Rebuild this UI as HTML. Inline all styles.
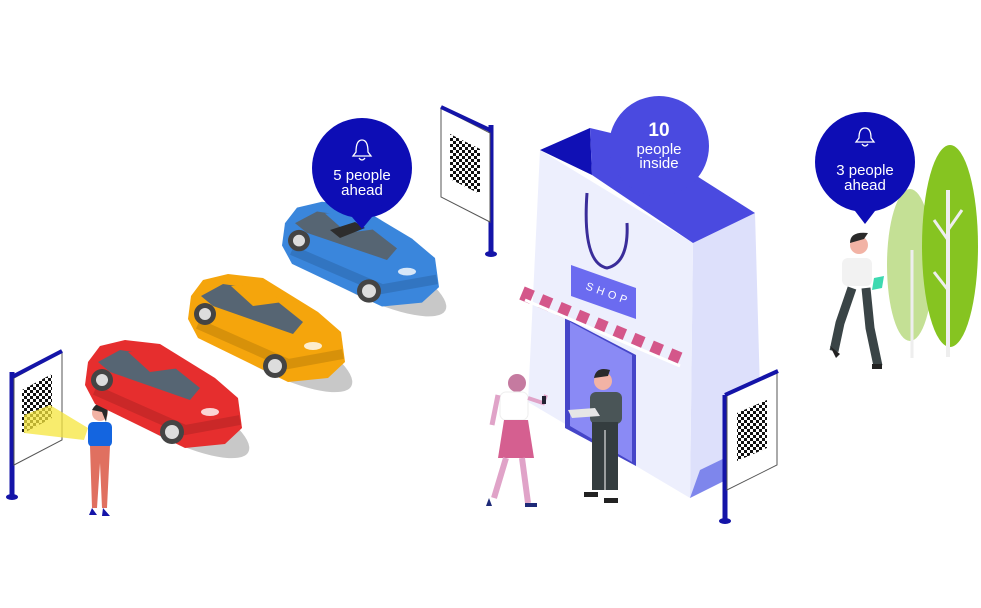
<!DOCTYPE html>
<html><head><meta charset="utf-8"><style>
html,body{margin:0;padding:0;background:#fff;width:981px;height:608px;overflow:hidden}
svg{display:block}
text{font-family:"Liberation Sans",sans-serif;fill:#fff}
</style></head><body>
<svg width="981" height="608" viewBox="0 0 981 608" xmlns="http://www.w3.org/2000/svg">
<defs>
<pattern id="qr" width="6" height="6" patternUnits="userSpaceOnUse">
<rect width="6" height="6" fill="#fff"/><rect width="3" height="3" fill="#111"/><rect x="3" y="3" width="3" height="3" fill="#111"/>
</pattern>
<g id="car">
<ellipse cx="170" cy="412" rx="88" ry="26" fill="#c8c8c8" transform="rotate(27 170 412)"/>
<path d="M88,362 L100,346 L125,340 L160,344 L215,378 L238,398 L242,428 L225,444 L185,448 L95,404 L85,385 Z"/>
<path d="M98,362 L120,350 L160,356 L200,388 L190,400 L110,372 Z" fill="#566573"/>
<path d="M128,352 L155,350 L180,368 L150,372 Z" class="roof"/>
<path d="M95,390 L185,430 L240,420" fill="none" stroke="#000" stroke-opacity="0.12" stroke-width="10"/>
<circle cx="102" cy="380" r="11" fill="#444"/><circle cx="102" cy="380" r="6" fill="#ddd"/>
<circle cx="172" cy="432" r="12" fill="#444"/><circle cx="172" cy="432" r="7" fill="#ddd"/>
<ellipse cx="210" cy="412" rx="9" ry="4" fill="#fff" opacity="0.8"/>
</g>
</defs>

<!-- Left sign -->
<line x1="12" y1="372" x2="12" y2="496" stroke="#1414a8" stroke-width="5"/>
<ellipse cx="12" cy="497" rx="6" ry="3" fill="#1414a8"/>
<polygon points="14,378 62,352 62,440 14,465" fill="#fff" stroke="#555" stroke-width="1"/>
<line x1="12" y1="377" x2="62" y2="351" stroke="#1414a8" stroke-width="4"/>
<polygon points="22,390 52,374 52,418 22,434" fill="url(#qr)"/>
<polygon points="24,415 50,405 88,428 84,440 24,433" fill="#f5e63c" opacity="0.75"/>

<!-- Left woman -->
<circle cx="100" cy="413" r="8" fill="#f2b3a5"/>
<path d="M92,410 q6,-12 16,-2 l-2,14 l-4,-10 z" fill="#2a2a2a"/>
<rect x="88" y="422" width="24" height="25" rx="5" fill="#1465e0"/>
<path d="M90,446 h20 l-3,62 h-5 l-2,-45 l-3,45 h-5 z" fill="#e07060"/>
<path d="M92,508 l-3,7 l8,0 z M103,508 l-1,8 l8,0 z" fill="#1414a8"/>

<!-- Cars -->
<use href="#car" fill="#e62e2e"/>
<use href="#car" fill="#f5a50c" transform="translate(103,-66)"/>
<use href="#car" fill="#3a86dc" transform="translate(197,-128) scale(1,0.97)"/>
<polygon points="330,230 355,222 365,228 340,238" fill="#2d2d2d"/>

<!-- Bubble 5 -->
<circle cx="362" cy="168" r="50" fill="#0d0db5"/>
<polygon points="342,205 382,205 362,229" fill="#0d0db5"/>
<path d="M356,152 q0,-12 6,-12 q6,0 6,12 l3,4 h-18 z M359,158 q3,4 6,0" fill="none" stroke="#fff" stroke-width="1.3"/>
<text x="362" y="180" font-size="15" text-anchor="middle">5 people</text>
<text x="362" y="195" font-size="15" text-anchor="middle">ahead</text>

<!-- Middle sign -->
<line x1="491" y1="125" x2="491" y2="253" stroke="#1414a8" stroke-width="5"/>
<ellipse cx="491" cy="254" rx="6" ry="3" fill="#1414a8"/>
<polygon points="441,108 490,133 490,222 441,197" fill="#fff" stroke="#555" stroke-width="1"/>
<line x1="441" y1="107" x2="492" y2="131" stroke="#1414a8" stroke-width="4"/>
<polygon points="450,134 480,149 480,194 450,179" fill="url(#qr)"/>

<!-- Shop bag -->
<polygon points="693,243 755,213 762,462 690,498" fill="#dde0fb"/>
<polygon points="540,150 693,243 690,498 528,402" fill="#edeffd"/>
<polygon points="700,470 762,440 762,462 690,498" fill="#7e86ec"/>
<polygon points="540,150 590,128 592,175" fill="#1010b5"/>
<polygon points="590,128 640,140 755,213 693,243 592,175" fill="#4a4ae0"/>
<path d="M587,193 q-5,70 20,75 q22,-5 20,-45" fill="none" stroke="#3a2d9a" stroke-width="3"/>
<polygon points="571,265 636,288 636,319 571,296" fill="#6b6bf0"/>
<text x="0" y="0" font-size="11" font-family="Liberation Serif" transform="translate(585,289) rotate(20)" letter-spacing="4">SHOP</text>
<polygon points="565,318 636,355 636,466 565,428" fill="#4545c8"/>
<polygon points="570,322 632,355 632,462 570,426" fill="#8a8af5"/>
<line x1="522" y1="293" x2="682" y2="360" stroke="#d4578a" stroke-width="14" stroke-dasharray="11 9"/>
<line x1="525" y1="300" x2="680" y2="366" stroke="#fff" stroke-width="3"/>

<!-- Bubble 10 -->
<circle cx="659" cy="146" r="50" fill="#4a4ae0"/>
<polygon points="640,184 678,184 659,206" fill="#4a4ae0"/>
<text x="659" y="136" font-size="19" font-weight="bold" text-anchor="middle">10</text>
<text x="659" y="154" font-size="15" text-anchor="middle">people</text>
<text x="659" y="168" font-size="15" text-anchor="middle">inside</text>

<!-- Pink woman -->
<circle cx="517" cy="383" r="9" fill="#c57aa0"/>
<rect x="500" y="392" width="28" height="28" rx="6" fill="#fff" stroke="#eee"/>
<path d="M528,398 l15,5 l3,-8" stroke="#e0a3c8" stroke-width="4" fill="none"/>
<rect x="542" y="396" width="4" height="8" fill="#223"/>
<path d="M498,395 l-6,30" stroke="#e0a3c8" stroke-width="5"/>
<polygon points="504,420 528,420 534,458 498,458" fill="#d55f90"/>
<path d="M506,458 l-12,40 M522,458 l6,45" stroke="#e0a3c8" stroke-width="6"/>
<path d="M489,498 l-3,8 h6 z M525,503 h12 v4 h-12z" fill="#1e2a78"/>

<!-- Man at shop -->
<circle cx="603" cy="381" r="9" fill="#f2b3a5"/>
<path d="M594,378 q2,-12 16,-8 l-2,6z" fill="#2a2a2a"/>
<rect x="590" y="392" width="32" height="32" rx="6" fill="#4a5557"/>
<polygon points="568,410 595,408 600,416 572,418" fill="#e6e6e6"/>
<rect x="592" y="422" width="26" height="68" fill="#343d3f"/>
<line x1="605" y1="430" x2="605" y2="492" stroke="#fff" stroke-width="1"/>
<path d="M584,492 h14 v5 h-14z M604,498 h14 v5 h-14z" fill="#222"/>

<!-- Right sign -->
<line x1="725" y1="395" x2="725" y2="520" stroke="#1414a8" stroke-width="5"/>
<ellipse cx="725" cy="521" rx="6" ry="3" fill="#1414a8"/>
<polygon points="727,395 777,373 777,465 727,490" fill="#fff" stroke="#555" stroke-width="1"/>
<line x1="725" y1="395" x2="778" y2="371" stroke="#1414a8" stroke-width="4"/>
<polygon points="737,413 767,400 767,448 737,461" fill="url(#qr)"/>

<!-- Trees -->
<ellipse cx="910" cy="265" rx="23" ry="76" fill="#c4e095"/>
<line x1="912" y1="250" x2="912" y2="358" stroke="#eee" stroke-width="3"/>
<ellipse cx="950" cy="246" rx="28" ry="101" fill="#86c421"/>
<line x1="948" y1="190" x2="948" y2="357" stroke="#eee" stroke-width="4"/>
<path d="M948,240 l-14,-20 M948,230 l14,-20 M948,290 l-14,-18" stroke="#eee" stroke-width="3"/>

<!-- Bubble 3 -->
<circle cx="865" cy="162" r="50" fill="#0d0db5"/>
<polygon points="845,198 885,198 865,224" fill="#0d0db5"/>
<path d="M859,138 q0,-10 6,-10 q6,0 6,10 l3,4 h-18 z M862,144 q3,4 6,0" fill="none" stroke="#fff" stroke-width="1.3"/>
<text x="865" y="175" font-size="15" text-anchor="middle">3 people</text>
<text x="865" y="190" font-size="15" text-anchor="middle">ahead</text>

<!-- Right man -->
<circle cx="859" cy="245" r="9" fill="#f2b3a5"/>
<path d="M850,243 q0,-12 18,-10 l-4,6z" fill="#2a2a2a"/>
<rect x="842" y="258" width="30" height="28" rx="6" fill="#f2f2f2"/>
<polygon points="874,278 884,276 882,288 872,290" fill="#3dd9b0"/>
<path d="M852,288 l-12,35 l-6,28 M866,288 l4,40 l8,38" stroke="#3a4446" stroke-width="9" fill="none"/>
<path d="M830,346 l6,12 l4,-4z M872,364 h10 v5 h-10z" fill="#222"/>
</svg>
</body></html>
